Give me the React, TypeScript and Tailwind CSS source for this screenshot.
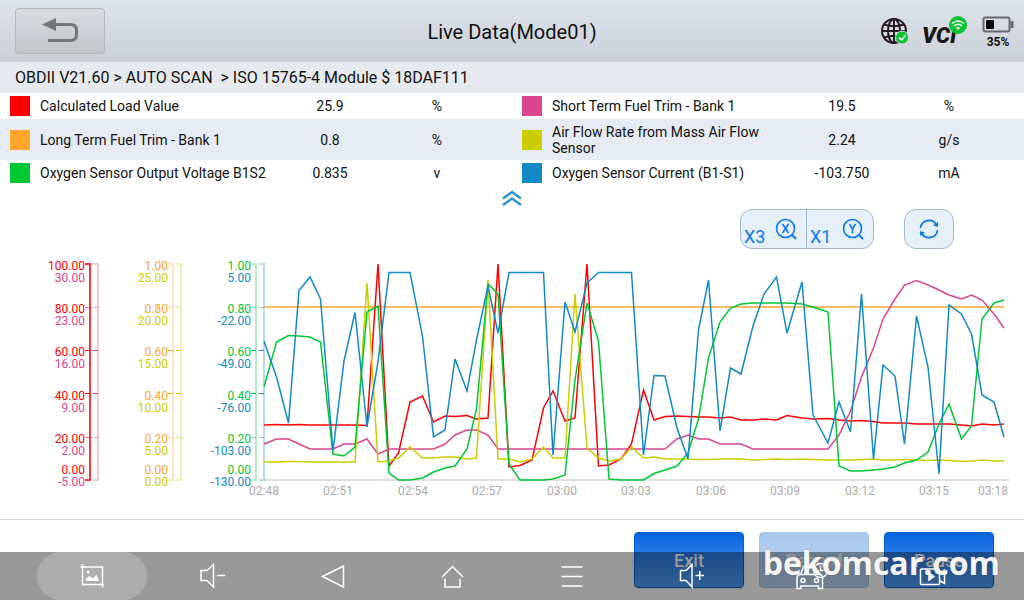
import type { ReactNode } from "react";

/* ===============================
   LIVE VALUES
================================= */
const rows = [
  [
    { name: "Calculated Load Value", value: "25.9", unit: "%", swatch: "bg-[#ff0000]" },
    { name: "Short Term Fuel Trim - Bank 1", value: "19.5", unit: "%", swatch: "bg-[#d9458f]" },
  ],
  [
    { name: "Long Term Fuel Trim - Bank 1", value: "0.8", unit: "%", swatch: "bg-[#ffa62b]" },
    { name: "Air Flow Rate from Mass Air Flow Sensor", value: "2.24", unit: "g/s", swatch: "bg-[#cccc00]" },
  ],
  [
    { name: "Oxygen Sensor Output Voltage B1S2", value: "0.835", unit: "v", swatch: "bg-[#00c832]" },
    { name: "Oxygen Sensor Current (B1-S1)", value: "-103.750", unit: "mA", swatch: "bg-[#128ac8]" },
  ],
];

/* ===============================
   CHART DATA
================================= */
const sampleX = [
  264, 276.5, 288.5, 299, 310, 320.5, 333, 344, 355, 367, 378, 389, 398.5, 410, 422.5, 433.5, 445,
  455, 467, 476.5, 488, 498, 509, 520, 532, 543.5, 553, 565, 575, 587, 598.5, 609, 621, 631.5,
  643.5, 654, 665, 677, 688, 698.5, 708.5, 720, 730.5, 741, 753, 764, 776.5, 787, 802, 813, 828,
  839, 850.5, 861.5, 873.5, 883, 895, 904.5, 916.5, 928, 939, 949, 961.5, 971.5, 982, 994, 1004,
];

const series = [
  {
    color: "#ffa62b",
    y: sampleX.map(() => 307),
  },
  {
    color: "#ff0000",
    y: [
      425, 424.5, 425, 424.5, 425, 425, 425, 425, 425, 425.5, 264, 466, 453, 402, 396, 422, 416,
      416.5, 415.5, 419, 418, 264, 467, 465.5, 460, 408, 391, 421, 418, 264, 466, 465, 459, 444,
      390, 420, 416.5, 416, 416.5, 417, 417, 418, 417, 420, 420, 419, 420, 415.5, 418, 419, 418.5,
      420, 421, 420.5, 421.5, 423, 423, 423, 424, 424, 424, 424, 425, 426, 424, 425, 424,
    ],
  },
  {
    color: "#d9458f",
    y: [
      444, 439, 439, 444, 449, 449, 449, 444, 444, 439, 454, 449, 449, 449, 449, 449, 444,
      435, 430, 430, 435, 449, 449, 449, 449, 449, 449, 449, 449, 449, 449, 449, 449, 449,
      449, 449, 449, 439, 435, 439, 439, 444, 444, 444, 449, 449, 449, 449, 449, 449, 449,
      435, 411, 377, 348, 319, 299, 285, 280.5, 285, 290, 295, 299, 295, 300, 314, 328,
    ],
  },
  {
    color: "#cccc00",
    y: [
      462, 462, 461.5, 461.5, 462, 462, 462, 462, 462, 283, 462, 461, 458, 447, 458, 458, 457,
      457, 459, 458, 280, 459, 459, 462, 459, 447, 458, 458, 294, 448, 458, 461, 459, 447,
      458, 457, 459, 459, 459, 459.5, 459.5, 459, 459, 459, 460, 459.5, 459, 459.5, 459, 459.5, 460,
      460, 460, 459.5, 459, 460, 460, 459.5, 460, 460.5, 460, 460.5, 461.5, 461, 460, 461, 461,
    ],
  },
  {
    color: "#00c832",
    y: [
      387, 342, 335.5, 336, 337, 342, 454, 456, 447, 312, 306, 473, 480, 480, 478, 472, 468,
      466, 449, 409, 284, 294, 464, 480, 480, 480, 479, 475, 380, 303, 341, 479, 480, 480,
      480, 473.5, 470, 466, 453, 419, 358, 322, 308, 304, 303, 303, 303, 303, 304, 307, 312,
      466, 471, 471, 470, 469, 467, 463, 460, 452, 424, 404, 439, 426, 319, 303, 300,
    ],
  },
  {
    color: "#128ac8",
    y: [
      341, 377, 423, 290.5, 277, 299, 451, 361, 312.5, 427, 362, 272.5, 272.5, 272.5, 336, 437, 430,
      359, 391, 340, 286, 333, 272.5, 272.5, 272.5, 272.5, 455, 302, 332, 283, 272.5, 272.5, 272.5, 272.5,
      455, 375.5, 376, 428, 459, 330, 280, 431, 368, 374, 326, 294, 277, 333, 282, 415, 443,
      402, 432, 294, 459, 365, 376, 444, 316, 367, 474, 305, 314, 334, 395, 402, 437,
    ],
  },
];

const tickY = [264, 307, 350, 393, 437, 480];
const labelY = [270, 313, 356, 400, 443, 474];

const axes = [
  { x: 90, labelX: 85, dy: 0, color: "#ff0000", opacity: 0.8, labels: ["100.00", "80.00", "60.00", "40.00", "20.00", "0.00"] },
  { x: 98, labelX: 85, dy: 12, color: "#d9458f", opacity: 0.3, labels: ["30.00", "23.00", "16.00", "9.00", "2.00", "-5.00"] },
  { x: 173, labelX: 168, dy: 0, color: "#ffa62b", opacity: 0.3, labels: ["1.00", "0.80", "0.60", "0.40", "0.20", "0.00"] },
  { x: 181, labelX: 168, dy: 12, color: "#cccc00", opacity: 0.3, labels: ["25.00", "20.00", "15.00", "10.00", "5.00", "0.00"] },
  { x: 256, labelX: 251, dy: 0, color: "#00c832", opacity: 0.3, labels: ["1.00", "0.80", "0.60", "0.40", "0.20", "0.00"] },
  { x: 264, labelX: 251, dy: 12, color: "#128ac8", opacity: 0.3, labels: ["5.00", "-22.00", "-49.00", "-76.00", "-103.00", "-130.00"] },
];

const times = [
  { x: 264, label: "02:48" },
  { x: 338, label: "02:51" },
  { x: 413, label: "02:54" },
  { x: 487, label: "02:57" },
  { x: 562, label: "03:00" },
  { x: 636, label: "03:03" },
  { x: 711, label: "03:06" },
  { x: 785, label: "03:09" },
  { x: 860, label: "03:12" },
  { x: 934, label: "03:15" },
  { x: 993, label: "03:18" },
];

export default function App() {
  return (
    <div className="relative flex min-h-screen flex-col overflow-hidden bg-white font-[Roboto,sans-serif] text-[#111]">
      <Header />
      <nav className="h-[31px] whitespace-pre bg-[#e6e9ee] px-[15px] text-base leading-[31px]">
        {"OBDII V21.60 > AUTO SCAN  > ISO 15765-4 Module $ 18DAF111"}
      </nav>

      <main className="flex-1">
        <ValueTable />
        <div className="flex h-[23px] justify-center">
          <button aria-label="Collapse values" className="flex w-10 items-center justify-center">
            <svg width="20" height="16" viewBox="0 0 20 16" fill="none" stroke="#2395d0" strokeWidth="2.4">
              <path d="M1 8.5 10 2l9 6.5M1 15l9-6.5 9 6.5" />
            </svg>
          </button>
        </div>
        <Toolbar />
        <Chart />
      </main>

      <footer className="flex h-[81px] justify-end gap-[15px] border-t border-[#d4d4d4] px-[30px] pt-3">
        <ActionButton label="Exit" />
        <ActionButton label="Record" disabled />
        <ActionButton label="Pause" />
      </footer>

      <SystemBar />
      <div className="pointer-events-none absolute bottom-[17px] right-6 font-['Open_Sans',sans-serif] text-[32px] font-bold leading-10 text-white/95 [text-shadow:0_0_2px_rgba(90,90,90,0.5)]">
        bekomcar.com
      </div>
    </div>
  );
}

function Header() {
  return (
    <header className="grid h-[62px] grid-cols-[1fr_auto_1fr] items-center bg-linear-to-b from-[#dfe4ec] to-[#cbcfd6] px-[10px]">
      <button
        aria-label="Back"
        className="ml-[5px] flex h-[46px] w-[90px] items-center justify-center rounded-sm border border-[#b6b9bc] bg-linear-to-b from-[#d8dde2] to-[#c2c6c9]"
      >
        <svg width="38" height="26" viewBox="0 0 38 26" fill="none">
          <path d="M14 6.500H29Q35.500 6.500 35.500 12V17Q35.500 22.500 29 22.500H7" stroke="#777" strokeWidth="3" />
          <path d="M1 6.500 15 0V13Z" fill="#777" />
        </svg>
      </button>
      <h1 className="pt-[2px] text-xl">Live Data(Mode01)</h1>
      <div className="flex items-center justify-end pt-[3px]">
        <svg width="30" height="30" viewBox="0 0 30 30" fill="none" className="mr-3" role="img" aria-label="Network connected">
          <g stroke="#241c20" strokeWidth="2">
            <circle cx="14" cy="13" r="12" />
            <ellipse cx="14" cy="13" rx="6" ry="12" />
            <path d="M14 1V25M2 13H26M4 6.500Q14 10 24 6.500M4 19.500Q14 16 24 19.500" />
          </g>
          <circle cx="22" cy="19.500" r="6.500" fill="#0bc332" stroke="#d5d9e0" />
          <path d="m19 19.500 2.500 2.500 4-4.500" stroke="#fff" strokeWidth="1.500" />
        </svg>
        <div className="relative mr-[14px] h-9 w-[46px]">
          <span className="absolute bottom-px left-0 text-[22px] font-black italic leading-7 text-[#161616]">VCI</span>
          <svg width="20" height="20" viewBox="0 0 20 20" fill="none" className="absolute right-0 top-0">
            <circle cx="10" cy="10" r="9" fill="#0bc332" />
            <g stroke="#fff" strokeWidth="1.500">
              <path d="M4 8.500Q10 3.500 16 8.500M6 11Q10 7.500 14 11" />
            </g>
            <path d="M7.800 12.800Q10 11.200 12.200 12.800L10 15Z" fill="#fff" />
          </svg>
        </div>
        <div className="flex flex-col items-center">
          <svg width="32" height="18" viewBox="0 0 32 18" fill="none">
            <rect x="1.500" y="1.500" width="26" height="14" rx="2" stroke="#67696d" strokeWidth="2" />
            <rect x="28.500" y="5" width="3" height="7" fill="#67696d" />
            <rect x="4" y="4" width="8" height="9" rx="1" fill="#000" />
          </svg>
          <span className="text-xs font-bold leading-4">35%</span>
        </div>
      </div>
    </header>
  );
}

function ValueTable() {
  return (
    <table className="w-full table-fixed text-sm leading-4">
      <colgroup>
        <col />
        <col className="w-[120px]" />
        <col className="w-[122px]" />
        <col />
        <col className="w-[120px]" />
        <col className="w-[122px]" />
      </colgroup>
      <tbody>
        {rows.map((pair, i) => (
          <tr key={i} className={i === 1 ? "h-[41px] bg-[#e6eaf2]" : "h-[26px]"}>
            {pair.map((item) => [
              <th key={item.name} scope="row" className="p-0 pl-[10px] text-left font-normal">
                <div className="flex items-center gap-[10px]">
                  <span className={`size-5 shrink-0 ${item.swatch}`} />
                  {item.name}
                </div>
              </th>,
              <td key={item.name + "-value"} className="p-0 text-center">{item.value}</td>,
              <td key={item.name + "-unit"} className="p-0 pr-7 text-center">{item.unit}</td>,
            ])}
          </tr>
        ))}
      </tbody>
    </table>
  );
}

function Toolbar() {
  return (
    <div className="flex h-10 justify-end gap-[30px] pr-[70px] text-lg text-[#0d78ee]">
      <div className="flex divide-x divide-[#9fb8d6] rounded-xl border border-[#9fb8d6] bg-[#e5f0f9]">
        <ZoomButton factor="X3" axis="X" />
        <ZoomButton factor="X1" axis="Y" />
      </div>
      <button
        aria-label="Reset zoom"
        className="flex w-[50px] items-center justify-center rounded-xl border border-[#9fb8d6] bg-[#e5f0f9]"
      >
        <svg width="20" height="20" viewBox="0 0 20 20" fill="none" stroke="currentColor" strokeWidth="1.800">
          <path d="M1.500 9A8.500 8.500 0 0 1 17.500 6M18.500 11A8.500 8.500 0 0 1 2.500 14" />
          <path d="M19 3V8L14 6.500ZM1 17V12L6 13.500Z" fill="currentColor" stroke="none" />
        </svg>
      </button>
    </div>
  );
}

function ZoomButton({ factor, axis }: { factor: string; axis: string }) {
  return (
    <button aria-label={`Zoom ${axis} axis ${factor}`} className="flex w-[66px] justify-between pl-[3px] pr-[9px]">
      <span className="self-end leading-[22px]">{factor}</span>
      <svg width="22" height="22" viewBox="0 0 22 22" fill="none" stroke="currentColor" strokeWidth="1.600" className="mt-2">
        <circle cx="10.500" cy="10.500" r="9" />
        <path d="m16.500 16.500 4.500 4.500" strokeWidth="2" />
        {axis === "X" ? <path d="m7.500 6 6 9M13.500 6l-6 9" /> : <path d="m7.500 6 3 5 3-5M10.500 11v4.500" />}
      </svg>
    </button>
  );
}

function Chart() {
  return (
    <svg viewBox="0 249 1024 260" className="block w-full text-xs" role="img" aria-label="Live data chart">
      <path d="M264 480H1009" stroke="#e0e0e0" strokeWidth="2" />

      {axes.map((axis) => (
        <g key={axis.x}>
          <path d={`M${axis.x - 5} 264H${axis.x}V480H${axis.x - 5}`} fill="none" stroke={axis.color} strokeWidth="2" opacity={axis.opacity} />
          {tickY.slice(1, 5).map((y, i) => (
            <path key={y} d={`M${axis.x - 5} ${y + 0.5}h5`} stroke={axis.color} opacity={i === 1 || i === 2 ? 1 : 0.5} />
          ))}
          {axis.labels.map((label, i) => (
            <text key={i} x={axis.labelX} y={labelY[i] + axis.dy} textAnchor="end" fill={axis.color}>
              {label}
            </text>
          ))}
        </g>
      ))}

      {series.map((s) => (
        <polyline
          key={s.color}
          points={s.y.map((y, i) => `${sampleX[i]},${y}`).join(" ")}
          fill="none"
          stroke={s.color}
          strokeWidth="1.500"
        />
      ))}

      {times.map((t) => (
        <text key={t.label} x={t.x} y="495" textAnchor="middle" fill="#aaaaaa">
          {t.label}
        </text>
      ))}
    </svg>
  );
}

function ActionButton({ label, disabled }: { label: string; disabled?: boolean }) {
  return (
    <button
      disabled={disabled}
      className="h-14 w-[110px] rounded-sm border border-[#0060cc] bg-linear-to-b from-[#0064dc] to-[#559ff8] pt-[2px] text-lg font-medium text-white shadow disabled:border-[#a6c6ea] disabled:from-[#a8c8ec] disabled:to-[#bbd5f2] disabled:shadow-none"
    >
      {label}
    </button>
  );
}

/* ===============================
   ANDROID SYSTEM BAR
================================= */
function SystemBar() {
  return (
    <nav className="absolute inset-x-0 bottom-0 flex h-12 bg-black/40 px-8">
      <NavButton label="Screenshot" active>
        <path d="M4.500 2V22.500H26M2.500 5H24.500V25.500" />
        <circle cx="10" cy="10" r="1.500" fill="currentColor" stroke="none" />
        <path d="M8 19V16.500l3-2.500 4 2.500 3.500-4L21 19Z" fill="currentColor" stroke="none" />
      </NavButton>
      <NavButton label="Volume down">
        <path d="M3 8.500H9L15.500 2.500V25L9 18.500H3ZM19 13.500H27" />
      </NavButton>
      <NavButton label="Back">
        <path d="M4.500 14.500 25.500 4V25Z" />
      </NavButton>
      <NavButton label="Home">
        <path d="M4 15 14.500 4.500 25 15M7 16.500V25H22V16.500" />
      </NavButton>
      <NavButton label="Menu">
        <path d="M3.500 5H24.500M3.500 14.500H24.500M3.500 24H24.500" />
      </NavButton>
      <NavButton label="Volume up">
        <path d="M2.500 8.500H8L14 2.500V25L8 18.500H2.500ZM17.500 13.500H26M21.800 9V18" />
      </NavButton>
      <NavButton label="Vehicle">
        <path d="M15 5H5.500L2.500 12.500H0.500M2.500 12.500H22Q24.500 13 24.500 16V26.500H20.500V24H3V26.500H-1V16Q-1 13 2.500 12.500" />
        <circle cx="5" cy="18.500" r="2" />
        <circle cx="18.500" cy="18.500" r="2" />
        <circle cx="22.500" cy="8.500" r="7" />
        <path d="M22.500 4.500V8.500H25.500" />
      </NavButton>
      <NavButton label="Screen recording">
        <rect x="2.500" y="7" width="19" height="15.500" rx="1" />
        <path d="M21.500 11 26.500 8V21.500L21.500 18.500" />
        <path d="M11 11 16 14.500 11 18Z" fill="currentColor" />
      </NavButton>
    </nav>
  );
}

function NavButton({ label, active, children }: { label: string; active?: boolean; children: ReactNode }) {
  return (
    <div className="flex flex-1 justify-center">
      <button
        aria-label={label}
        className={`flex w-[110px] items-center justify-center rounded-full text-white ${active ? "bg-white/20" : ""}`}
      >
        <svg width="28" height="28" viewBox="0 0 28 28" fill="none" stroke="currentColor" strokeWidth="1.500" className="overflow-visible">
          {children}
        </svg>
      </button>
    </div>
  );
}
